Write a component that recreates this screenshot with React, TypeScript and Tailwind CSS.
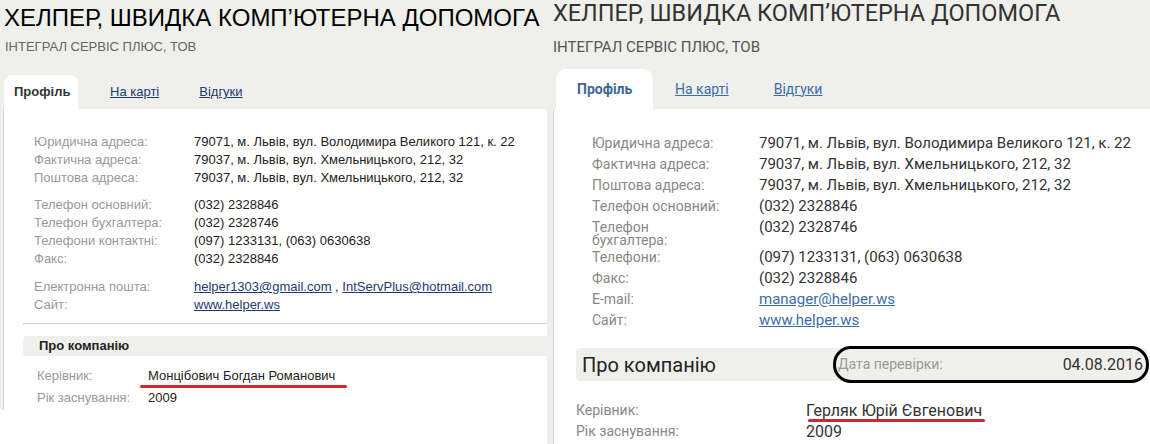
import React from 'react';

type Row = { label: string; value: React.ReactNode; gap?: boolean };

const leftRows: Row[] = [
  { label: 'Юридична адреса:', value: '79071, м. Львів, вул. Володимира Великого 121, к. 22' },
  { label: 'Фактична адреса:', value: '79037, м. Львів, вул. Хмельницького, 212, 32' },
  { label: 'Поштова адреса:', value: '79037, м. Львів, вул. Хмельницького, 212, 32' },
  { label: 'Телефон основний:', value: '(032) 2328846', gap: true },
  { label: 'Телефон бухгалтера:', value: '(032) 2328746' },
  { label: 'Телефони контактні:', value: '(097) 1233131, (063) 0630638' },
  { label: 'Факс:', value: '(032) 2328846' },
];

const rightRows: Row[] = [
  { label: 'Юридична адреса:', value: '79071, м. Львів, вул. Володимира Великого 121, к. 22' },
  { label: 'Фактична адреса:', value: '79037, м. Львів, вул. Хмельницького, 212, 32' },
  { label: 'Поштова адреса:', value: '79037, м. Львів, вул. Хмельницького, 212, 32' },
  { label: 'Телефон основний:', value: '(032) 2328846' },
  { label: 'Телефон бухгалтера:', value: '(032) 2328746' },
  { label: 'Телефони:', value: '(097) 1233131, (063) 0630638' },
  { label: 'Факс:', value: '(032) 2328846' },
  { label: 'E-mail:', value: <a href="#" className="text-[#3b6ea8] underline">manager@helper.ws</a> },
  { label: 'Сайт:', value: <a href="#" className="text-[#3b6ea8] underline">www.helper.ws</a> },
];

function OldProfile() {
  return (
    <div className="w-[547px] shrink-0 bg-white font-['Liberation_Sans',Arial,sans-serif]">
      <div className="h-[410px] bg-[#efefeb] flex flex-col">
        <h1 className="pl-[4px] pt-[4px] text-[24px] leading-[28px] text-black whitespace-nowrap">
          ХЕЛПЕР, ШВИДКА КОМП’ЮТЕРНА ДОПОМОГА
        </h1>
        <div className="pl-[5px] mt-[7px] text-[13px] leading-[16px] text-[#666]">ІНТЕГРАЛ СЕРВІС ПЛЮС, ТОВ</div>
        <div className="flex items-center mt-[20px] pl-[4px] h-[34px] text-[13px]">
          <div className="h-full w-[74px] bg-white rounded-t-[8px] pl-[10px] flex items-center font-bold text-[#333]">
            Профіль
          </div>
          <a href="#" className="ml-[32px] text-[#1d3b6e] underline">На карті</a>
          <a href="#" className="ml-[40px] text-[#1d3b6e] underline">Відгуки</a>
        </div>
        <div className="flex-1 ml-[3px] bg-white border-l border-[#d4d4d4] pt-[24px] text-[13px]">
          {leftRows.map((r) => (
            <div key={r.label} className={`flex leading-[18px] pl-[30px] ${r.gap ? 'mt-[9px]' : ''}`}>
              <div className="w-[160px] text-[#999]">{r.label}</div>
              <div className="text-[#222]">{r.value}</div>
            </div>
          ))}
          <div className="flex leading-[18px] pl-[30px] mt-[10px]">
            <div className="w-[160px] text-[#999]">Електронна пошта:</div>
            <div className="text-[#222]">
              <a href="#" className="text-[#1d3b6e] underline">helper1303@gmail.com</a>
              {' , '}
              <a href="#" className="text-[#1d3b6e] underline">IntServPlus@hotmail.com</a>
            </div>
          </div>
          <div className="flex leading-[18px] pl-[30px]">
            <div className="w-[160px] text-[#999]">Сайт:</div>
            <a href="#" className="text-[#1d3b6e] underline">www.helper.ws</a>
          </div>
          <div className="ml-[19px] mt-[9px] border-t border-[#cfcfcf]" />
          <div className="ml-[19px] mt-[12px] h-[20px] bg-[#efefeb] rounded-l-[4px] pl-[16px] flex items-center font-bold text-[#222]">
            Про компанію
          </div>
          <div className="flex leading-[22px] pl-[33px] mt-[9px]">
            <div className="w-[111px] text-[#999]">Керівник:</div>
            <div className="relative text-[#222]">
              Монцібович Богдан Романович
              <div className="absolute left-[-8px] right-[-12px] top-[20px] h-[3px] rounded-full bg-[#d22630]" />
            </div>
          </div>
          <div className="flex leading-[22px] pl-[33px]">
            <div className="w-[111px] text-[#999]">Рік заснування:</div>
            <div className="text-[#222]">2009</div>
          </div>
        </div>
      </div>
    </div>
  );
}

function NewProfile() {
  return (
    <div className="flex-1 bg-[#efefeb] pl-[6px] flex flex-col font-['Roboto',sans-serif]">
      <h1 className="pt-[1px] text-[23.5px] leading-[24px] text-[#333] whitespace-nowrap">
        ХЕЛПЕР, ШВИДКА КОМП’ЮТЕРНА ДОПОМОГА
      </h1>
      <div className="mt-[14px] text-[15px] leading-[16px] text-[#555]">ІНТЕГРАЛ СЕРВІС ПЛЮС, ТОВ</div>
      <div className="flex items-center mt-[14px] pl-[3px] h-[40px] text-[14px]">
        <div className="h-full w-[97px] bg-white rounded-t-[10px] pl-[21px] flex items-center font-bold text-[#3d6896]">
          Профіль
        </div>
        <a href="#" className="ml-[22px] text-[#3b6ea8] underline">На карті</a>
        <a href="#" className="ml-[45px] text-[#3b6ea8] underline">Відгуки</a>
      </div>
      <div className="flex-1 bg-white border-l border-[#d8d8d8] pt-[24px]">
        {rightRows.map((r) => (
          <div key={r.label} className="flex pl-[38px]">
            <div className="w-[167px] pr-[34px] pt-[4px] text-[14px] leading-[13px] text-[#888]">{r.label}</div>
            <div className="text-[15px] leading-[21px] text-[#333]">{r.value}</div>
          </div>
        ))}
        <div className="ml-[22px] mr-[3px] mt-[17px] h-[33px] bg-[#efefeb] rounded-[4px] flex items-center pl-[6px]">
          <div className="text-[20px] text-[#222]">Про компанію</div>
          <div className="ml-auto -mr-[2px] -my-[2px] w-[316px] h-[37px] border-[3px] border-black rounded-[18px] flex items-center justify-between pl-[2px] pr-[3px]">
            <span className="text-[14px] text-[#999]">Дата перевірки:</span>
            <span className="text-[16px] text-[#333]">04.08.2016</span>
          </div>
        </div>
        <div className="flex pl-[22px] mt-[19px] leading-[21px]">
          <div className="w-[230px] text-[14px] text-[#888]">Керівник:</div>
          <div className="relative text-[16px] text-[#333]">
            Герляк Юрій Євгенович
            <div className="absolute left-[2px] right-[-3px] top-[19px] h-[3px] rounded-full bg-[#d22630]" />
          </div>
        </div>
        <div className="flex pl-[22px] leading-[21px]">
          <div className="w-[230px] text-[14px] text-[#888]">Рік заснування:</div>
          <div className="text-[16px] text-[#333]">2009</div>
        </div>
      </div>
    </div>
  );
}

export default function App() {
  return (
    <div className="w-[1150px] h-[444px] flex overflow-hidden bg-white">
      <OldProfile />
      <NewProfile />
    </div>
  );
}
